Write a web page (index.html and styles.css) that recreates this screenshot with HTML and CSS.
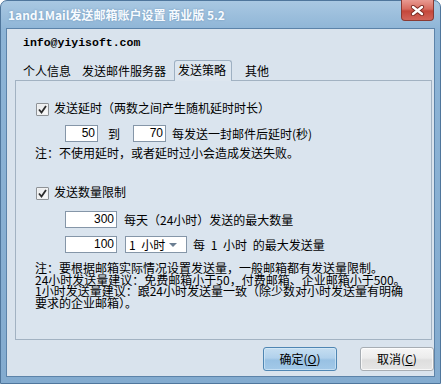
FILE: index.html
```html
<!DOCTYPE html>
<html lang="zh-CN">
<head>
<meta charset="utf-8">
<link rel="stylesheet" href="styles.css">
</head>
<body>
<div class="window">
  <div class="titlebar">
    <span class="title">1and1Mail发送邮箱账户设置 商业版 5.2</span>
    <div class="close">
      <svg width="15" height="11" viewBox="0 0 15 11">
        <path d="M3 2 L12 9 M12 2 L3 9" stroke="#7a2a22" stroke-width="4.2" stroke-linecap="round"/>
        <path d="M3 2 L12 9 M12 2 L3 9" stroke="#ffffff" stroke-width="2.4" stroke-linecap="round"/>
      </svg>
    </div>
  </div>
  <div class="client">
    <div class="email">info@yiyisoft.com</div>
    <div class="tabs">
      <div class="tab t1">个人信息</div>
      <div class="tab t2">发送邮件服务器</div>
      <div class="tab active">发送策略</div>
      <div class="tab t4">其他</div>
    </div>
    <div class="panel">
      <div class="check-row first">
        <span class="checkbox"><svg width="9" height="9" viewBox="0 0 9 9"><path d="M1 4.5 L3.5 7.5 L8 1" fill="none" stroke="#2b2b2b" stroke-width="1.8"/></svg></span>
        <span>发送延时（两数之间产生随机延时时长）</span>
      </div>
      <div class="row delay-row">
        <span class="input short">50</span>
        <span class="to">到</span>
        <span class="input short">70</span>
        <span class="after-short">每发送一封邮件后延时(秒)</span>
      </div>
      <div class="note1">注：不使用延时，或者延时过小会造成发送失败。</div>
      <div class="check-row second">
        <span class="checkbox"><svg width="9" height="9" viewBox="0 0 9 9"><path d="M1 4.5 L3.5 7.5 L8 1" fill="none" stroke="#2b2b2b" stroke-width="1.8"/></svg></span>
        <span>发送数量限制</span>
      </div>
      <div class="row day-row">
        <span class="input long">300</span>
        <span class="after-long">每天（24小时）发送的最大数量</span>
      </div>
      <div class="row hour-row">
        <span class="input long">100</span>
        <span class="select"><span class="sel-text">1 小时</span><span class="arrow"></span></span>
        <span class="after-select">每 1 小时 的最大发送量</span>
      </div>
      <div class="notes">
        <div class="note-line">注：要根据邮箱实际情况设置发送量，一般邮箱都有发送量限制。</div>
        <div class="note-line">24小时发送量建议：免费邮箱小于50，付费邮箱、企业邮箱小于500。</div>
        <div class="note-line">1小时发送量建议：跟24小时发送量一致（除少数对小时发送量有明确</div>
        <div class="note-line">要求的企业邮箱）。</div>
      </div>
    </div>
    <div class="buttons">
      <div class="btn ok">确定(<u>O</u>)</div>
      <div class="btn cancel">取消(<u>C</u>)</div>
    </div>
  </div>
</div>
</body>
</html>
```

FILE: styles.css
```css
* { box-sizing: border-box; }
html, body { margin: 0; padding: 0; }
body {
  width: 441px;
  height: 384px;
  background: #ffffff;
  font-family: "Noto Sans CJK SC", "Liberation Sans", sans-serif;
  font-size: 12px;
  color: #000;
  overflow: hidden;
}
.window {
  width: 441px;
  height: 384px;
  border: 1px solid #4f769c;
  border-radius: 7px 7px 0 0;
  padding: 0 5px 6px 5px;
  background: linear-gradient(to bottom, #a9c8e2 0px, #8db4d6 30px, #83abcf 100%);
  display: flex;
  flex-direction: column;
}
.titlebar {
  height: 27px;
  display: flex;
  align-items: flex-start;
}
.title {
  margin-top: 7px;
  padding-left: 2px;
  line-height: 14px;
  font-weight: bold;
  color: #f7fbff;
  text-shadow: 0 0 2px rgba(60, 100, 140, 0.45);
  white-space: nowrap;
}
.close {
  margin-left: auto;
  margin-right: 1px;
  margin-top: -1px;
  width: 33px;
  height: 21px;
  border: 1px solid #8a3a33;
  border-top: none;
  border-radius: 0 0 4px 4px;
  background: linear-gradient(to bottom, #e99a91 0%, #d76b5f 45%, #c4473a 55%, #d2645a 100%);
  display: flex;
  align-items: center;
  justify-content: center;
}
.client {
  flex: 1;
  border: 1px solid #5c83a9;
  background: #d9e3ed;
  display: flex;
  flex-direction: column;
}
.email {
  margin: 7px 0 0 16px;
  line-height: 14px;
  height: 14px;
  font-family: "Liberation Mono", monospace;
  font-weight: bold;
  font-size: 11.5px;
}
.tabs {
  margin: 10px 0 0 8px;
  height: 20px;
  display: flex;
  align-items: flex-end;
  position: relative;
  z-index: 1;
}
.tab {
  height: 18px;
  line-height: 18px;
  white-space: nowrap;
}
.t1 { margin-left: 8px; }
.t2 { margin-left: 11px; }
.tab.active {
  margin-left: 8px;
  height: 21px;
  margin-bottom: -1px;
  padding: 0 5px 0 3px;
  border: 1px solid #9eb0c2;
  border-bottom: none;
  border-radius: 3px 3px 0 0;
  background: #dde6ef;
  line-height: 17px;
}
.t4 { margin-left: 13px; }
.panel {
  margin: 0 2px 0 8px;
  height: 260px;
  border: 1px solid #a2b2c2;
  background: #dae4ee;
  padding: 20px 0 0 19px;
}
.check-row {
  display: flex;
  align-items: flex-start;
  line-height: 14px;
  height: 14px;
  white-space: nowrap;
}
.check-row.second { margin-top: 25px; }
.checkbox {
  margin: 2px 5px 0 1px;
  width: 13px;
  height: 13px;
  border: 1px solid #8e9296;
  border-radius: 1px;
  background: linear-gradient(to bottom right, #e6e8ea, #fbfbfb);
  box-shadow: inset 0 0 0 1px #f0f1f2;
  display: flex;
  align-items: center;
  justify-content: center;
}
.row {
  display: flex;
  align-items: center;
  height: 17px;
  margin-left: 30px;
  white-space: nowrap;
}
.delay-row { margin-top: 10px; }
.day-row { margin-top: 12px; }
.hour-row { margin-top: 8px; }
.input {
  height: 17px;
  border: 1px solid #8596a8;
  background: #fff;
  text-align: right;
  padding-right: 2px;
  line-height: 15px;
  font-family: "Liberation Sans", sans-serif;
  font-size: 12px;
}
.input.short { width: 33px; }
.input.long { width: 52px; }
.to { margin: 0 13px 0 10px; }
.after-short { margin-left: 6px; }
.after-long { margin-left: 7px; }
.select {
  margin-left: 8px;
  width: 62px;
  height: 17px;
  border: 1px solid #8596a8;
  background: #fff;
  display: flex;
  align-items: center;
  padding-left: 3px;
  line-height: 15px;
  white-space: pre;
}
.sel-text { word-spacing: 3px; }
.arrow {
  margin-left: auto;
  margin-right: 9px;
  width: 0;
  height: 0;
  border-left: 4px solid transparent;
  border-right: 4px solid transparent;
  border-top: 4px solid #6b7e92;
}
.after-select { margin-left: 6px; word-spacing: 3px; }
.note1 {
  margin-top: 4px;
  line-height: 14px;
  height: 14px;
  white-space: nowrap;
}
.notes {
  margin-top: 9px;
  white-space: nowrap;
}
.note-line {
  height: 11.7px;
  line-height: 11.7px;
}
.buttons {
  margin-top: 7px;
  display: flex;
  justify-content: flex-end;
  gap: 23px;
}
.btn {
  width: 74px;
  height: 24px;
  border-radius: 3px;
  display: flex;
  align-items: center;
  justify-content: center;
  line-height: 14px;
}
.btn u { text-underline-offset: 1px; }
.ok {
  border: 1px solid #4f86b3;
  background: linear-gradient(to bottom, #c6def1 0%, #b1d1ec 45%, #98c1e3 55%, #a3c9e8 100%);
  box-shadow: inset 0 0 0 1px rgba(220, 238, 250, 0.6);
}
.cancel {
  border: 1px solid #a7adb3;
  background: linear-gradient(to bottom, #f6f6f6 0%, #ececec 45%, #dedede 55%, #e6e6e6 100%);
  box-shadow: inset 0 0 0 1px rgba(255, 255, 255, 0.7);
}
```
